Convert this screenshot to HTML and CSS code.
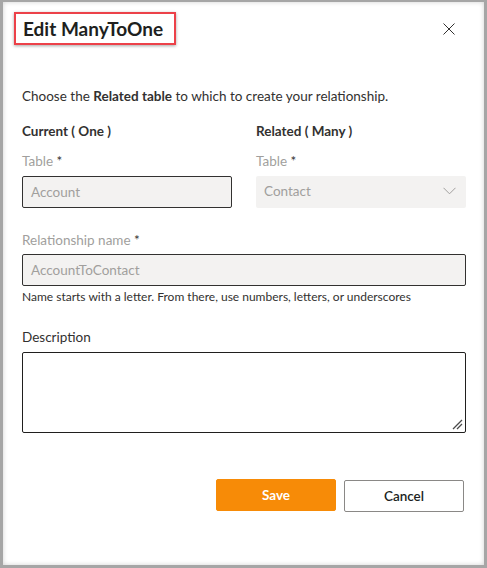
FILE: index.html
```html
<!DOCTYPE html>
<html lang="en">
<head>
<meta charset="utf-8">
<title>Edit ManyToOne</title>
<link rel="stylesheet" href="styles.css">
</head>
<body>
<div class="frame">
  <div class="header">
    <div class="title-box"><h1 class="title">Edit ManyToOne</h1></div>
    <button class="close" aria-label="Close">
      <svg width="12" height="12" viewBox="0 0 12 12"><path d="M0.5 0.5 L11.5 11.5 M11.5 0.5 L0.5 11.5" stroke="#323130" stroke-width="1" fill="none"/></svg>
    </button>
  </div>

  <p class="intro">Choose the <b>Related table</b> to which to create your relationship.</p>

  <div class="cols">
    <div class="col">
      <div class="col-title">Current ( One )</div>
      <div class="label">Table <span class="req">*</span></div>
      <div class="input bordered">Account</div>
    </div>
    <div class="col">
      <div class="col-title">Related ( Many )</div>
      <div class="label">Table <span class="req">*</span></div>
      <div class="input select">Contact
        <svg class="chev" width="13" height="8" viewBox="0 0 13 8"><path d="M0.5 0.8 L6.5 6.8 L12.5 0.8" stroke="#a19f9d" stroke-width="1" fill="none"/></svg>
      </div>
    </div>
  </div>

  <div class="label rel-label">Relationship name <span class="req">*</span></div>
  <div class="input bordered full">AccountToContact</div>
  <div class="help">Name starts with a letter. From there, use numbers, letters, or underscores</div>

  <div class="label desc-label">Description</div>
  <div class="textarea">
    <svg class="grip" width="11" height="11" viewBox="0 0 11 11"><path d="M1 10 L10 1 M5 10 L10 5" stroke="#4a4a4a" stroke-width="1.3" fill="none"/></svg>
  </div>

  <div class="actions">
    <button class="btn primary">Save</button>
    <button class="btn secondary">Cancel</button>
  </div>
</div>
</body>
</html>
```

FILE: styles.css
```css
* { box-sizing: border-box; }
html, body { margin: 0; padding: 0; background: #fff; }
body {
  font-family: "Lato", "Noto Sans", sans-serif;
  color: #323130;
}
.frame {
  width: 487px;
  height: 568px;
  border-style: solid;
  border-color: #a6a6a6;
  border-width: 2px 3px 3px 3px;
  box-shadow: inset 0 0 5px rgba(0,0,0,0.18);
  padding: 10px 18px 0 19px;
  display: flex;
  flex-direction: column;
}
.header {
  display: flex;
  align-items: center;
  margin-left: -8px;
  height: 33px;
}
.title-box {
  border: 2px solid #ec4149;
  box-shadow: 0 1px 3px rgba(0,0,0,0.35);
  padding: 0 11px 0 7px;
  height: 33px;
}
.title {
  margin: 0;
  font-size: 19px;
  font-weight: 700;
  line-height: 29px;
  color: #201f1e;
}
.close {
  margin-left: auto;
  margin-right: 11px;
  background: none;
  border: 0;
  padding: 0;
  width: 12px;
  height: 12px;
  display: flex;
}
.intro {
  margin: 41px 0 0 0;
  font-size: 13.5px;
  line-height: 20px;
}
.intro b { font-weight: 700; }
.cols {
  display: flex;
  gap: 24px;
  margin-top: 15px;
}
.col { flex: 1; display: flex; flex-direction: column; }
.col-title {
  font-size: 13.5px;
  font-weight: 700;
  line-height: 20px;
}
.label {
  font-size: 13.5px;
  line-height: 20px;
  color: #a19f9d;
}
.col .label { margin-top: 10px; }
.req { color: #323130; }
.input {
  margin-top: 5px;
  height: 32px;
  background: #f3f2f1;
  border-radius: 2px;
  font-size: 13.5px;
  color: #a19f9d;
  padding: 0 8px;
  display: flex;
  align-items: center;
}
.bordered { border: 1px solid #323130; }
.select { padding-bottom: 2px; }
.chev { margin-left: auto; margin-right: 2px; }
.rel-label { margin-top: 22px; }
.full { margin-top: 4px; }
.help {
  font-size: 12px;
  line-height: 16px;
  margin-top: 3px;
}
.desc-label { margin-top: 22px; color: #323130; }
.textarea {
  margin-top: 5px;
  height: 81px;
  border: 1px solid #201f1e;
  border-radius: 2px;
  display: flex;
  justify-content: flex-end;
  align-items: flex-end;
  padding: 0 2px 2px 0;
}
.actions {
  display: flex;
  justify-content: flex-end;
  gap: 8px;
  margin-top: 46px;
  padding-right: 2px;
}
.btn {
  width: 120px;
  height: 32px;
  border-radius: 2px;
  font-family: inherit;
  font-size: 13.5px;
  cursor: pointer;
}
.primary {
  background: #f78b07;
  border: 1px solid #f78b07;
  color: #fff;
  font-weight: 700;
}
.secondary {
  background: #fff;
  border: 1px solid #8a8886;
  color: #201f1e;
  font-weight: 600;
  margin-top: 1px;
}
```
